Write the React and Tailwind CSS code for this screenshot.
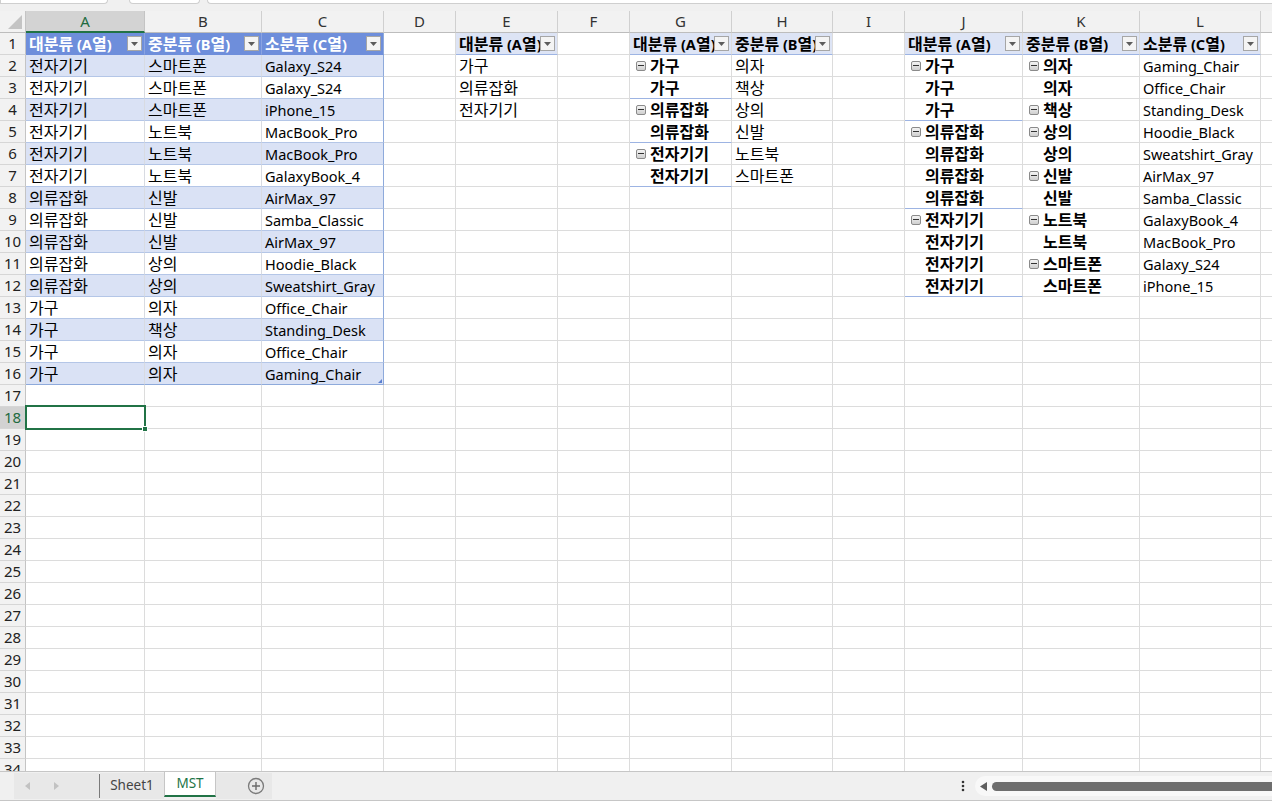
import React from 'react';

const COLS = [
  { k: 'A', w: 'w-[119px]' },
  { k: 'B', w: 'w-[117px]' },
  { k: 'C', w: 'w-[122px]' },
  { k: 'D', w: 'w-[72px]' },
  { k: 'E', w: 'w-[102px]' },
  { k: 'F', w: 'w-[72px]' },
  { k: 'G', w: 'w-[102px]' },
  { k: 'H', w: 'w-[101px]' },
  { k: 'I', w: 'w-[72px]' },
  { k: 'J', w: 'w-[118px]' },
  { k: 'K', w: 'w-[117px]' },
  { k: 'L', w: 'w-[121px]' },
  { k: 'M', w: 'w-[72px]' },
];

const T1 = [
  ['전자기기', '스마트폰', 'Galaxy_S24'],
  ['전자기기', '스마트폰', 'Galaxy_S24'],
  ['전자기기', '스마트폰', 'iPhone_15'],
  ['전자기기', '노트북', 'MacBook_Pro'],
  ['전자기기', '노트북', 'MacBook_Pro'],
  ['전자기기', '노트북', 'GalaxyBook_4'],
  ['의류잡화', '신발', 'AirMax_97'],
  ['의류잡화', '신발', 'Samba_Classic'],
  ['의류잡화', '신발', 'AirMax_97'],
  ['의류잡화', '상의', 'Hoodie_Black'],
  ['의류잡화', '상의', 'Sweatshirt_Gray'],
  ['가구', '의자', 'Office_Chair'],
  ['가구', '책상', 'Standing_Desk'],
  ['가구', '의자', 'Office_Chair'],
  ['가구', '의자', 'Gaming_Chair'],
];

const E_VALS = ['가구', '의류잡화', '전자기기'];
const G_ROWS = [
  ['가구', true, false],
  ['가구', false, true],
  ['의류잡화', true, false],
  ['의류잡화', false, true],
  ['전자기기', true, false],
  ['전자기기', false, true],
];
const H_VALS = ['의자', '책상', '상의', '신발', '노트북', '스마트폰'];
const J_ROWS = [
  ['가구', true, '의자', true, 'Gaming_Chair'],
  ['가구', false, '의자', false, 'Office_Chair'],
  ['가구', false, '책상', true, 'Standing_Desk'],
  ['의류잡화', true, '상의', true, 'Hoodie_Black'],
  ['의류잡화', false, '상의', false, 'Sweatshirt_Gray'],
  ['의류잡화', false, '신발', true, 'AirMax_97'],
  ['의류잡화', false, '신발', false, 'Samba_Classic'],
  ['전자기기', true, '노트북', true, 'GalaxyBook_4'],
  ['전자기기', false, '노트북', false, 'MacBook_Pro'],
  ['전자기기', false, '스마트폰', true, 'Galaxy_S24'],
  ['전자기기', false, '스마트폰', false, 'iPhone_15'],
];
const J_SEP = [2, 6, 10];

function Txt({ children }) {
  const parts = String(children).split(/([\uAC00-\uD7A3]+)/);
  return (
    <>
      {parts.map((p, i) =>
        /[\uAC00-\uD7A3]/.test(p) ? (
          <span key={i} className="text-[16px]">
            {p}
          </span>
        ) : (
          <span key={i}>{p}</span>
        )
      )}
    </>
  );
}

function getCell(r, k) {
  const ti = ['A', 'B', 'C'].indexOf(k);
  if (ti >= 0) {
    if (r === 1) return { kind: 't1h', text: ['대분류 (A열)', '중분류 (B열)', '소분류 (C열)'][ti], isC: k === 'C' };
    if (r >= 2 && r <= 16) return { kind: 't1b', text: T1[r - 2][ti], band: r % 2 === 0, last: r === 16, isC: k === 'C' };
  }
  if (k === 'E') {
    if (r === 1) return { kind: 'ph', text: '대분류 (A열)' };
    if (r >= 2 && r <= 4) return { kind: 'pv', text: E_VALS[r - 2] };
  }
  if (k === 'G') {
    if (r === 1) return { kind: 'ph', text: '대분류 (A열)' };
    if (r >= 2 && r <= 7) {
      const g = G_ROWS[r - 2];
      return { kind: 'pr', text: g[0], icon: g[1], sep: g[2] };
    }
  }
  if (k === 'H') {
    if (r === 1) return { kind: 'ph', text: '중분류 (B열)' };
    if (r >= 2 && r <= 7) return { kind: 'pv', text: H_VALS[r - 2] };
  }
  if (k === 'J') {
    if (r === 1) return { kind: 'ph', text: '대분류 (A열)' };
    if (r >= 2 && r <= 12) {
      const g = J_ROWS[r - 2];
      return { kind: 'pr', text: g[0], icon: g[1], sep: J_SEP.includes(r - 2) };
    }
  }
  if (k === 'K') {
    if (r === 1) return { kind: 'ph', text: '중분류 (B열)' };
    if (r >= 2 && r <= 12) {
      const g = J_ROWS[r - 2];
      return { kind: 'pr', text: g[2], icon: g[3], sep: false };
    }
  }
  if (k === 'L') {
    if (r === 1) return { kind: 'ph', text: '소분류 (C열)' };
    if (r >= 2 && r <= 12) return { kind: 'pv', text: J_ROWS[r - 2][4] };
  }
  return { kind: 'empty' };
}

function Dropdown() {
  return (
    <span className="ml-auto mr-[2px] w-[15px] h-[15px] shrink-0 border border-[#a6a6a6] bg-[#f4f4f4] flex items-center justify-center">
      <svg width="7" height="4" viewBox="0 0 7 4">
        <path d="M0 0h7L3.5 4z" fill="#5c5c5c" />
      </svg>
    </span>
  );
}

function Minus() {
  return (
    <span className="w-[10px] h-[10px] shrink-0 border border-[#8a8a8a] rounded-[2px] bg-linear-to-b from-[#f4f4f4] to-[#cfcfcf] flex items-center justify-center">
      <span className="w-[6px] h-px bg-[#333]" />
    </span>
  );
}

function Cell({ r, col }) {
  const c = getCell(r, col.k);
  const base = `${col.w} h-[22px] shrink-0 flex items-center border-r border-b overflow-hidden whitespace-nowrap relative leading-[20px]`;
  if (c.kind === 't1h') {
    return (
      <div className={`${base} bg-[#6e8edb] border-b-[#6e8edb] ${c.isC ? 'border-r-[#8eaadb]' : 'border-r-[#8aa3e2]'} pl-[3px] text-white font-bold`}>
        <span className="min-w-0 overflow-hidden leading-[20px]">
          <Txt>{c.text}</Txt>
        </span>
        <Dropdown />
      </div>
    );
  }
  if (c.kind === 't1b') {
    return (
      <div className={`${base} ${c.band ? 'bg-[#dae2f5]' : 'bg-white'} ${c.last ? 'border-b-[#8eaadb]' : 'border-b-[#b4c6e7]'} ${c.isC ? 'border-r-[#8eaadb]' : 'border-r-[#d8dbe2]'} pl-[3px] text-black`}>
        <span>
          <Txt>{c.text}</Txt>
        </span>
        {c.last && c.isC ? (
          <span className="absolute right-[1px] bottom-[1px] w-0 h-0 border-l-[4px] border-l-transparent border-b-[4px] border-b-[#5b7fd0]" />
        ) : null}
      </div>
    );
  }
  if (c.kind === 'ph') {
    return (
      <div className={`${base} bg-[#dde4f5] border-b-[#9db4e3] border-r-[#dcdcdc] pl-[3px] text-black font-bold`}>
        <span className="min-w-0 overflow-hidden leading-[20px]">
          <Txt>{c.text}</Txt>
        </span>
        <Dropdown />
      </div>
    );
  }
  if (c.kind === 'pv') {
    return (
      <div className={`${base} border-r-[#dcdcdc] border-b-[#dcdcdc] pl-[3px] text-black`}>
        <span>
          <Txt>{c.text}</Txt>
        </span>
      </div>
    );
  }
  if (c.kind === 'pr') {
    return (
      <div className={`${base} border-r-[#dcdcdc] ${c.sep ? 'border-b-[#9db4e3]' : 'border-b-[#dcdcdc]'} pl-[6px] text-black font-bold`}>
        {c.icon ? <Minus /> : <span className="w-[10px] shrink-0" />}
        <span className="ml-[4px]">
          <Txt>{c.text}</Txt>
        </span>
      </div>
    );
  }
  return <div className={`${base} border-r-[#dcdcdc] border-b-[#dcdcdc]`} />;
}

function Row({ r }) {
  const sel = r === 18;
  return (
    <div className="flex h-[22px] shrink-0">
      <div
        className={`w-[26px] h-[22px] shrink-0 flex items-center justify-center border-r border-b border-r-[#c4c4c4] border-b-[#d6d6d6] text-[15px] ${
          sel ? 'bg-[#d2d2d2] text-[#1e6b41]' : 'bg-[#f2f2f2] text-[#222]'
        }`}
      >
        {r}
      </div>
      {COLS.map((col) => (
        <Cell key={col.k} r={r} col={col} />
      ))}
    </div>
  );
}

function ColHeader() {
  return (
    <div className="flex h-[22px] shrink-0">
      <div className="w-[26px] h-[22px] shrink-0 bg-[#f2f2f2] border-r border-b border-r-[#c4c4c4] border-b-[#bdbdbd] relative">
        <svg className="absolute right-[3px] bottom-[3px]" width="14" height="14" viewBox="0 0 14 14">
          <path d="M14 0V14H0z" fill="#c4c4c4" />
        </svg>
      </div>
      {COLS.map((col) =>
        col.k === 'A' ? (
          <div
            key={col.k}
            className={`${col.w} h-[22px] shrink-0 flex items-center justify-center bg-[#d3d3d3] border-r border-r-[#c4c4c4] border-b-2 border-b-[#217346] text-[15px] text-[#1e6b41]`}
          >
            {col.k}
          </div>
        ) : (
          <div
            key={col.k}
            className={`${col.w} h-[22px] shrink-0 flex items-center justify-center bg-[#f2f2f2] border-r border-b border-r-[#d0d0d0] border-b-[#bdbdbd] text-[15px] text-[#333]`}
          >
            {col.k}
          </div>
        )
      )}
    </div>
  );
}

function TabBar() {
  return (
    <div className="h-[30px] shrink-0 bg-[#f0f0f0] border-t border-t-[#c6c6c6] border-b border-b-[#c6c6c6] flex items-stretch relative">
      <div className="ml-[14px] w-[85px] my-[1px] bg-[#e8e8e8] flex items-center">
        <svg className="ml-[11px]" width="6" height="8" viewBox="0 0 6 8">
          <path d="M5 0v8L0 4z" fill="#c2c2c2" />
        </svg>
        <svg className="ml-[22px]" width="6" height="8" viewBox="0 0 6 8">
          <path d="M1 0v8l5-4z" fill="#c2c2c2" />
        </svg>
      </div>
      <div className="w-px my-[2px] bg-[#7a7a7a]" />
      <div className="w-[64px] my-[1px] bg-[#e8e8e8] flex items-center justify-center text-[13.5px] text-[#444]">Sheet1</div>
      <div className="w-[52px] mb-[3px] bg-white border-l border-r border-[#c6c6c6] border-b-2 border-b-[#217346] flex items-center justify-center text-[13.5px] text-[#217346]">
        MST
      </div>
      <div className="w-[56px] my-[1px] bg-[#e8e8e8] flex items-center justify-end pr-[7px]">
        <svg width="18" height="18" viewBox="0 0 18 18">
          <circle cx="9" cy="9" r="7.5" fill="none" stroke="#7a7a7a" strokeWidth="1.3" />
          <path d="M9 5v8M5 9h8" stroke="#6a6a6a" strokeWidth="1.4" />
        </svg>
      </div>
      <div className="flex-1" />
      <div className="flex items-center mr-[10px]">
        <svg width="4" height="12" viewBox="0 0 4 12">
          <circle cx="2" cy="2" r="1.3" fill="#333" />
          <circle cx="2" cy="6" r="1.3" fill="#333" />
          <circle cx="2" cy="10" r="1.3" fill="#333" />
        </svg>
      </div>
      <div className="w-[297px] my-[4px] bg-[#f8f8f8] rounded-l-full flex items-center pl-[5px]">
        <svg width="8" height="9" viewBox="0 0 8 9">
          <path d="M7 0v9L0 4.5z" fill="#5e5e5e" />
        </svg>
        <div className="ml-[4px] flex-1 h-[9px] bg-[#6e6e6e] rounded-l-full" />
      </div>
    </div>
  );
}

export default function App() {
  const rows = [];
  for (let r = 1; r <= 34; r++) rows.push(r);
  return (
    <div className="w-[1272px] h-[801px] overflow-hidden bg-white flex flex-col relative font-['Noto_Sans','Noto_Sans_CJK_KR',sans-serif] text-[14.5px] leading-none">
      <div className="h-[11px] shrink-0 bg-[#f0f0f0] flex items-start">
        <div className="w-[108px] h-[4px] bg-white border border-t-0 border-[#cfcfcf] rounded-br-[5px]" />
        <div className="ml-[21px] w-[71px] h-[4px] bg-white border border-t-0 border-[#cfcfcf] rounded-b-[5px]" />
        <div className="ml-[7px] flex-1 h-[4px] bg-white border border-t-0 border-r-0 border-[#cfcfcf] rounded-bl-[5px]" />
      </div>
      <ColHeader />
      <div className="h-[738px] shrink-0 overflow-hidden flex flex-col">
        {rows.map((r) => (
          <Row key={r} r={r} />
        ))}
      </div>
      <TabBar />
      <div className="absolute left-[25px] top-[405px] w-[121px] h-[25px] border-2 border-[#217346]" />
      <div className="absolute left-[142px] top-[426px] w-[6px] h-[6px] bg-[#217346] border border-white" />
    </div>
  );
}
